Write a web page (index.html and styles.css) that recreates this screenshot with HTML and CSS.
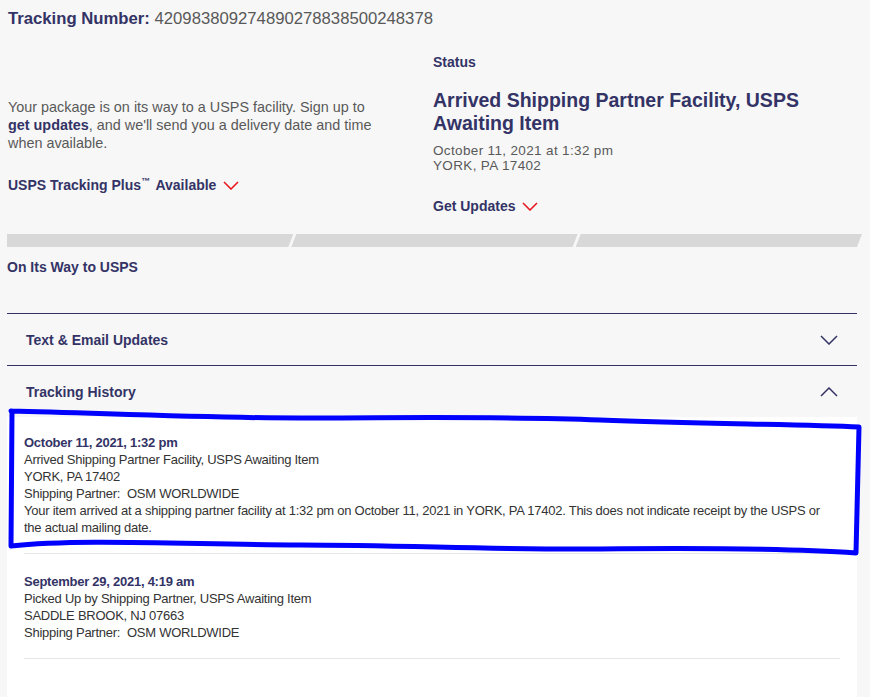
FILE: index.html
```html
<!DOCTYPE html>
<html lang="en">
<head>
    <meta charset="UTF-8">
    <meta name="viewport" content="width=device-width, initial-scale=1.0">
    <title>USPS Tracking</title>
    <link rel="stylesheet" href="styles.css">
</head>
<body>
    <div class="page">
        <div class="tracking-number">
            <span class="label">Tracking Number:</span> 420983809274890278838500248378
        </div>

        <div class="summary">
            <div class="summary-left">
                <p class="summary-text">Your package is on its way to a USPS facility. Sign up to <b class="strong-link">get updates</b>, and we'll send you a delivery date and time when available.</p>
                <a href="#" class="dropdown-link">
                    <span>USPS Tracking Plus<sup>™</sup> Available</span>
                    <svg class="red-chevron" viewBox="0 0 16 9"><path d="M1 1L8 8L15 1" /></svg>
                </a>
            </div>
            <div class="summary-right">
                <h3 class="status-label">Status</h3>
                <h2 class="status-title">Arrived Shipping Partner Facility, USPS Awaiting Item</h2>
                <p class="status-meta">October 11, 2021 at 1:32 pm<br>YORK, PA 17402</p>
                <a href="#" class="dropdown-link">
                    <span>Get Updates</span>
                    <svg class="red-chevron" viewBox="0 0 16 9"><path d="M1 1L8 8L15 1" /></svg>
                </a>
            </div>
        </div>

        <div class="progress-bar">
            <div class="progress-step first"></div>
            <div class="progress-step"></div>
            <div class="progress-step last"></div>
        </div>
        <div class="progress-label">On Its Way to USPS</div>

        <div class="accordion">
            <div class="accordion-header">
                <span>Text &amp; Email Updates</span>
                <svg class="chevron" viewBox="0 0 18 10"><path d="M1 1L9 9L17 1" /></svg>
            </div>
            <div class="accordion-header">
                <span>Tracking History</span>
                <svg class="chevron" viewBox="0 0 18 10"><path d="M1 9L9 1L17 9" /></svg>
            </div>
            <div class="history-panel">
                <div class="event">
                    <div class="event-date">October 11, 2021, 1:32 pm</div>
                    <div>Arrived Shipping Partner Facility, USPS Awaiting Item</div>
                    <div>YORK, PA 17402</div>
                    <div>Shipping Partner:&nbsp; OSM WORLDWIDE</div>
                    <div>Your item arrived at a shipping partner facility at 1:32 pm on October 11, 2021 in YORK, PA 17402. This does not indicate receipt by the USPS or the actual mailing date.</div>
                </div>
                <div class="event">
                    <div class="event-date">September 29, 2021, 4:19 am</div>
                    <div>Picked Up by Shipping Partner, USPS Awaiting Item</div>
                    <div>SADDLE BROOK, NJ 07663</div>
                    <div>Shipping Partner:&nbsp; OSM WORLDWIDE</div>
                </div>
            </div>
        </div>

        <!-- hand-drawn highlight over the latest event -->
        <svg class="highlight" viewBox="0 0 870 697">
            <path d="M11 411 C 100 413, 200 418, 300 418 S 500 416, 600 420 S 800 424, 859 427 L 856 553 C 800 549, 700 548, 600 549 S 400 545, 300 545 S 80 538, 11 546 L 12 411 Z" />
        </svg>
    </div>
</body>
</html>
```

FILE: styles.css
```css
:root {
    --navy: #333366;
    --gray-text: #595959;
    --red: #e71921;
    --bg-color: #f7f7f7;
    --bar-color: #d8d8d8;
    --line-light: #e6e6e6;
}

* {
    margin: 0;
    padding: 0;
    box-sizing: border-box;
}

body {
    font-family: "Liberation Sans", Arial, sans-serif;
    background-color: var(--bg-color);
    color: var(--gray-text);
    overflow: hidden;
}

a {
    text-decoration: none;
}

.page {
    position: relative;
    height: 697px;
    padding-left: 7px;
}

.tracking-number {
    padding: 9px 0 0 1px;
    font-size: 16.7px;
    line-height: 19px;
    color: var(--gray-text);
}

.tracking-number .label {
    font-weight: bold;
    color: var(--navy);
}

.summary {
    display: grid;
    grid-template-columns: 425px 1fr;
    padding-left: 1px;
}

.summary-left {
    padding-top: 70px;
}

.summary-text {
    font-size: 14.4px;
    line-height: 18px;
    width: 372px;
}

.strong-link {
    font-weight: bold;
    color: var(--navy);
}

.dropdown-link {
    display: inline-flex;
    align-items: center;
    gap: 7px;
    font-size: 14px;
    font-weight: bold;
    line-height: 18px;
    color: var(--navy);
}

.summary-left .dropdown-link {
    margin-top: 24px;
}

.dropdown-link sup {
    font-size: 9px;
    line-height: 0;
    margin-right: 2px;
}

.red-chevron {
    width: 16px;
    height: 9px;
    fill: none;
    stroke: var(--red);
    stroke-width: 1.6;
    margin-top: 1px;
}

.summary-right {
    padding-top: 25px;
}

.status-label {
    font-size: 14px;
    line-height: 18px;
    color: var(--navy);
}

.status-title {
    margin-top: 18px;
    font-size: 19.5px;
    line-height: 23px;
    color: var(--navy);
    width: 400px;
}

.status-meta {
    margin-top: 8px;
    font-size: 13.5px;
    letter-spacing: 0.35px;
    line-height: 15px;
}

.summary-right .dropdown-link {
    margin-top: 24px;
}

.progress-bar {
    display: flex;
    width: 855px;
    height: 13px;
    margin-top: 19px;
}

.progress-step {
    flex: 1;
    background-color: var(--bar-color);
    clip-path: polygon(5px 0, 100% 0, calc(100% - 5px) 100%, 0 100%);
    margin-left: -2px;
}

.progress-step.first {
    margin-left: 0;
    clip-path: polygon(0 0, 100% 0, calc(100% - 5px) 100%, 0 100%);
}

.progress-label {
    margin-top: 11px;
    font-size: 14px;
    font-weight: bold;
    line-height: 18px;
    color: var(--navy);
}

.accordion {
    width: 850px;
    margin-top: 37px;
}

.accordion-header {
    display: flex;
    justify-content: space-between;
    align-items: center;
    height: 52px;
    padding: 0 19px;
    border-top: 1px solid var(--navy);
    font-size: 14px;
    font-weight: bold;
    color: var(--navy);
}

.chevron {
    width: 18px;
    height: 10px;
    fill: none;
    stroke: var(--navy);
    stroke-width: 1.5;
}

.history-panel {
    background-color: #fff;
    padding: 0 17px;
    height: 300px;
    font-size: 13px;
    letter-spacing: -0.25px;
    line-height: 17px;
    color: #333;
}

.event {
    padding: 19px 0 17px;
    border-bottom: 1px solid var(--line-light);
}

.event:first-child {
    padding-top: 17px;
}

.event-date {
    font-weight: bold;
    color: var(--navy);
}

.highlight {
    position: absolute;
    top: 0;
    left: 0;
    width: 870px;
    height: 697px;
    pointer-events: none;
}

.highlight path {
    fill: none;
    stroke: #0000ff;
    stroke-width: 5;
    stroke-linejoin: round;
    stroke-linecap: round;
}
```
